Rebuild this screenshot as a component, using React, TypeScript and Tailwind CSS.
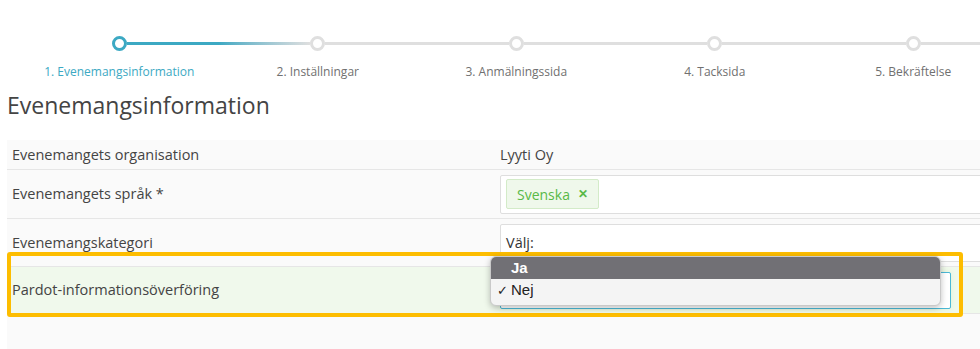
import React from 'react';

const steps = [
  '1. Evenemangsinformation',
  '2. Inställningar',
  '3. Anmälningssida',
  '4. Tacksida',
  '5. Bekräftelse',
];

function Stepper() {
  return (
    <div className="flex w-[1200px] pl-[20px] pt-[36px]">
      {steps.map((label, i) => {
        const active = i === 0;
        return (
          <div key={label} className="flex w-[198.5px] shrink-0 flex-col items-center">
            <div className="flex h-[15px] w-full items-center">
              {i === 0 ? (
                <div className="h-[3px] flex-1" />
              ) : i === 1 ? (
                <div className="h-[3px] flex-1 bg-gradient-to-r from-[#3ca9c3] to-[#dfdfdf]" />
              ) : (
                <div className="h-[3px] flex-1 bg-[#dfdfdf]" />
              )}
              <div
                className={
                  active
                    ? 'h-[15px] w-[15px] shrink-0 rounded-full border-[3px] border-[#3ca9c3] bg-white'
                    : 'h-[15px] w-[15px] shrink-0 rounded-full border-[3px] border-[#dfdfdf] bg-white'
                }
              />
              <div className={active ? 'h-[3px] flex-1 bg-[#3ca9c3]' : 'h-[3px] flex-1 bg-[#dfdfdf]'} />
            </div>
            <div
              className={
                active
                  ? 'mt-[13px] whitespace-nowrap text-[12px] leading-[16px] text-[#3ca9c3]'
                  : 'mt-[13px] whitespace-nowrap text-[12px] leading-[16px] text-[#707070]'
              }
            >
              {label}
            </div>
          </div>
        );
      })}
    </div>
  );
}

function Row({ label, children, className }: { label: string; children?: React.ReactNode; className: string }) {
  return (
    <div className={`flex border-b border-[#e6e6e6] ${className}`}>
      <div className="flex w-[493px] shrink-0 items-center pl-[5px] text-[14.5px] text-[#444]">{label}</div>
      <div className="flex flex-1 items-center">{children}</div>
    </div>
  );
}

export default function App() {
  return (
    <div className="relative h-[349px] w-[980px] overflow-hidden bg-white font-['Open_Sans',sans-serif]">
      <Stepper />

      <h1 className="mt-[11px] pl-[7px] text-[23px] leading-[28px] text-[#444]">Evenemangsinformation</h1>

      <div className="ml-[7px] mt-[21px] w-[1000px] bg-[#fafafa]">
        <Row label="Evenemangets organisation" className="h-[30px]">
          <span className="text-[14.5px] text-[#444]">Lyyti Oy</span>
        </Row>

        <Row label="Evenemangets språk *" className="h-[49px] py-[5px]">
          <div className="flex h-[39px] w-full items-center rounded-[2px] border border-[#dedede] bg-white pl-[5px]">
            <span className="flex h-[30px] items-center gap-[8px] rounded-[2px] border border-[#d3ebc8] bg-[#eff8eb] px-[10px] text-[14px] text-[#58b947]">
              Svenska
              <span className="text-[12px] font-bold">✕</span>
            </span>
          </div>
        </Row>

        <Row label="Evenemangskategori" className="h-[48px] py-[5px]">
          <div className="flex h-[38px] w-full items-center rounded-[2px] border border-[#dedede] bg-white pl-[5px] text-[14.5px] text-[#333]">
            Välj:
          </div>
        </Row>

        <Row label="Pardot-informationsöverföring" className="h-[47px] bg-[#f0f9ec]">
          <div className="h-[37px] w-[451px] rounded-[2px] border border-[#4bb8d6] bg-white shadow-[0_0_6px_#dff2d4]" />
        </Row>

        <Row label="Evenemangets plats" className="h-[80px] items-start pt-[30px]" />
      </div>

      <div className="absolute left-[7px] top-[252px] h-[65px] w-[956px] rounded-[3px] border-[4px] border-[#fdbd00]" />

      <div className="absolute left-[490px] top-[256px] w-[451px] overflow-hidden rounded-[6px] border border-[#c9c9c9] bg-[#f4f4f4] pb-[3px] font-['Liberation_Sans',sans-serif] shadow-[0_2px_6px_rgba(0,0,0,0.25)]">
        <div className="flex h-[22px] items-center bg-[#717075] pl-[20px] text-[15px] font-semibold text-white">Ja</div>
        <div className="flex h-[23px] items-center text-[15px] text-[#222]">
          <span className="w-[20px] pl-[6px] text-[13px]">✓</span>
          Nej
        </div>
      </div>
    </div>
  );
}
